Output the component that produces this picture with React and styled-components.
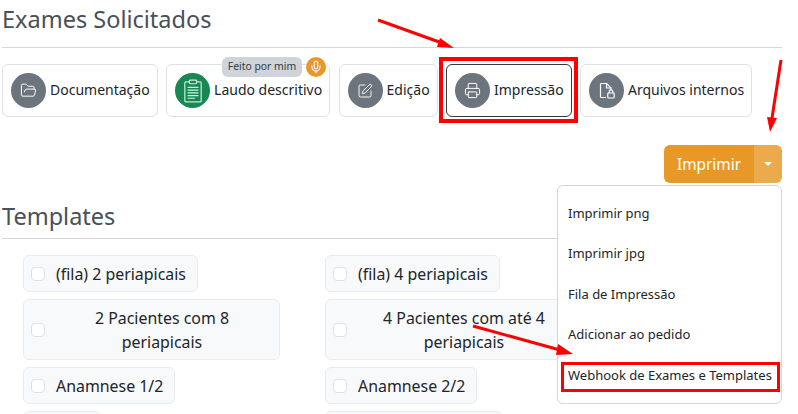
import styled, { createGlobalStyle } from 'styled-components'
import { FolderOpen, SquarePen, Printer, Mic } from 'lucide-react'

const GlobalStyle = createGlobalStyle`
    html, body {
        margin: 0;
        height: 100%;
        overflow: hidden;
        background: #fff;
    }
    body {
        font-family: "Noto Sans", "Open Sans", sans-serif;
        color: #212529;
    }
`

const Page = styled.div`
    position: relative;
    width: 798px;
    height: 414px;
    overflow: hidden;
    padding: 0 16px 0 2px;
    box-sizing: border-box;
`

const Heading = styled.h2`
    margin: 0;
    font-size: 23.5px;
    font-weight: 400;
    line-height: 32px;
    color: #495057;
    padding-top: ${p => p.$top || 0}px;
    padding-bottom: ${p => p.$pad || 11}px;
    border-bottom: 1px solid #d5d6d8;
`

const Cards = styled.div`
    display: flex;
    gap: 8.4px;
    margin-top: 16px;
`

const Card = styled.div`
    position: relative;
    display: flex;
    align-items: center;
    gap: 4px;
    height: 53px;
    box-sizing: border-box;
    padding: 0 7px 0 8px;
    border: 1px solid ${p => p.$active ? '#343a40' : '#dee2e6'};
    border-radius: 6px;
    font-size: 14px;
    line-height: 18px;
    color: #212529;
    background: #fff;
`

const CardLabel = styled.span`
    margin-bottom: 2px;
`

const Circle = styled.span`
    flex: none;
    display: flex;
    align-items: center;
    justify-content: center;
    width: 35px;
    height: 35px;
    border-radius: 50%;
    color: #fff;
    background: ${p => p.$color || '#6c757d'};
`

const Badges = styled.div`
    position: absolute;
    top: -8px;
    right: 3px;
    display: flex;
    align-items: center;
    gap: 4px;
`

const Pill = styled.span`
    height: 20px;
    padding: 0 6px;
    border-radius: 6px;
    background: #ced4da;
    font-size: 10.4px;
    line-height: 19px;
    color: #343a40;
`

const MicBadge = styled.span`
    display: flex;
    align-items: center;
    justify-content: center;
    width: 20px;
    height: 20px;
    border-radius: 50%;
    background: #e8982a;
    color: #fff;
`

const Actions = styled.div`
    display: flex;
    justify-content: flex-end;
    margin-top: 28px;
`

const PrintButton = styled.button`
    height: 38px;
    width: 90px;
    border: 0;
    border-radius: 6px 0 0 6px;
    background: #e89826;
    color: #fff;
    font: inherit;
    font-size: 15.4px;
`

const Caret = styled.button`
    display: flex;
    align-items: center;
    justify-content: center;
    height: 38px;
    width: 28px;
    border: 0;
    border-radius: 0 6px 6px 0;
    background: #ebaa4b;
    &::after {
        content: '';
        border-top: 4px solid #fff;
        border-left: 4px solid transparent;
        border-right: 4px solid transparent;
    }
`

const Menu = styled.div`
    position: absolute;
    top: 185px;
    left: 557px;
    width: 225px;
    height: 219px;
    box-sizing: border-box;
    padding: 7px 0;
    background: #fff;
    border: 1px solid #d5d6d8;
    border-radius: 6px;
    z-index: 2;
`

const MenuItem = styled.div`
    height: 40.4px;
    line-height: 40px;
    padding-left: 10px;
    font-size: 13px;
    color: #212529;
    white-space: nowrap;
`

const Templates = styled.section`
    margin-top: 17px;
`

const Grid = styled.div`
    display: grid;
    grid-template-columns: 302px 302px;
    gap: 7px 0;
    padding: 16px 0 0 21px;
`

const Item = styled.label`
    display: flex;
    align-items: center;
    width: ${p => p.$width ? `${p.$width}px` : 'fit-content'};
    max-width: 257px;
    min-height: 37px;
    box-sizing: border-box;
    padding: 5.5px 11px 5.5px 7px;
    background: #f8f9fa;
    border: 1px solid #e9ecef;
    border-radius: 6px;
    font-size: 15.9px;
    line-height: 24px;
    text-align: center;
    color: #212529;
`

const Box = styled.span`
    flex: none;
    width: 14px;
    height: 14px;
    margin-right: 11px;
    background: #fff;
    border: 1px solid #dee2e6;
    border-radius: 4px;
    box-sizing: border-box;
`

const Marks = styled.svg`
    position: absolute;
    top: 0;
    left: 0;
    z-index: 3;
    pointer-events: none;
`

const FileLock = () => (
    <svg width="18" height="18" viewBox="0 0 18 18" fill="none" stroke="currentColor" strokeWidth="1.2" strokeLinejoin="round">
        <path d="M8 15.5H3.5a1 1 0 0 1-1-1V2.5a1 1 0 0 1 1-1h5l4.5 4.5v2" />
        <path d="M8.5 1.5V6H13" />
        <rect x="9.8" y="11" width="6.4" height="5" rx="0.8" />
        <path d="M11.2 11V9.6a1.8 1.8 0 0 1 3.6 0V11" />
    </svg>
)

const Clipboard = () => (
    <svg width="20" height="24" viewBox="0 0 22 26" fill="none">
        <rect x="2" y="3" width="18" height="22" rx="1" stroke="#bfe9d4" strokeWidth="1.4" />
        <rect x="7" y="1" width="8" height="4" rx="1" fill="#198754" stroke="#d7f0e3" strokeWidth="1.2" />
        <path d="M5 9h12M5 12h12M5 15h12M5 18h12M5 21h8" stroke="#d7f0e3" strokeWidth="1.3" />
    </svg>
)

const cards = [
    { label: 'Documentação', icon: <FolderOpen size={17} strokeWidth={1.4} /> },
    { label: 'Laudo descritivo', icon: <Clipboard />, color: '#198754', badge: true },
    { label: 'Edição', icon: <SquarePen size={16} strokeWidth={1.4} /> },
    { label: 'Impressão', icon: <Printer size={17} strokeWidth={1.4} />, active: true },
    { label: 'Arquivos internos', icon: <FileLock /> },
]

const menu = ['Imprimir png', 'Imprimir jpg', 'Fila de Impressão', 'Adicionar ao pedido', 'Webhook de Exames e Templates']

const templates = [
    '(fila) 2 periapicais',
    '(fila) 4 periapicais',
    '2 Pacientes com 8 periapicais',
    '4 Pacientes com até 4 periapicais',
    'Anamnese 1/2',
    'Anamnese 2/2',
]

export default function App() {
    return (
        <Page>
            <GlobalStyle />
            <Heading $top={3} $pad={12}>Exames Solicitados</Heading>
            <Cards>
                {cards.map(card => (
                    <Card key={card.label} $active={card.active}>
                        <Circle $color={card.color}>{card.icon}</Circle>
                        <CardLabel>{card.label}</CardLabel>
                        {card.badge && (
                            <Badges>
                                <Pill>Feito por mim</Pill>
                                <MicBadge><Mic size={14} strokeWidth={1.8} /></MicBadge>
                            </Badges>
                        )}
                    </Card>
                ))}
            </Cards>
            <Actions>
                <PrintButton>Imprimir</PrintButton>
                <Caret aria-label="Mais opções" />
            </Actions>
            <Menu>
                {menu.map(item => <MenuItem key={item}>{item}</MenuItem>)}
            </Menu>
            <Templates>
                <Heading $pad={6}>Templates</Heading>
                <Grid>
                    {templates.map(item => (
                        <Item key={item}>
                            <Box />
                            <span>{item}</span>
                        </Item>
                    ))}
                    <Item $width={78} />
                    <Item $width={178} />
                </Grid>
            </Templates>
            <Marks width="798" height="414" viewBox="0 0 798 414">
                <g fill="none" stroke="#ff0000">
                    <rect x="441" y="59" width="135" height="62" strokeWidth="4" />
                    <rect x="562.5" y="363.5" width="216" height="27" strokeWidth="3" />
                    <path d="M378 20L442 43" strokeWidth="3" />
                    <path d="M781 60L772 118" strokeWidth="3" />
                    <path d="M473 326L560 350" strokeWidth="3" />
                </g>
                <g fill="#ff0000">
                    <path d="M454 48L440 38L437 47Z" />
                    <path d="M770 132L767 117L777 118Z" />
                    <path d="M573 354L558 344L556 355Z" />
                </g>
            </Marks>
        </Page>
    )
}
